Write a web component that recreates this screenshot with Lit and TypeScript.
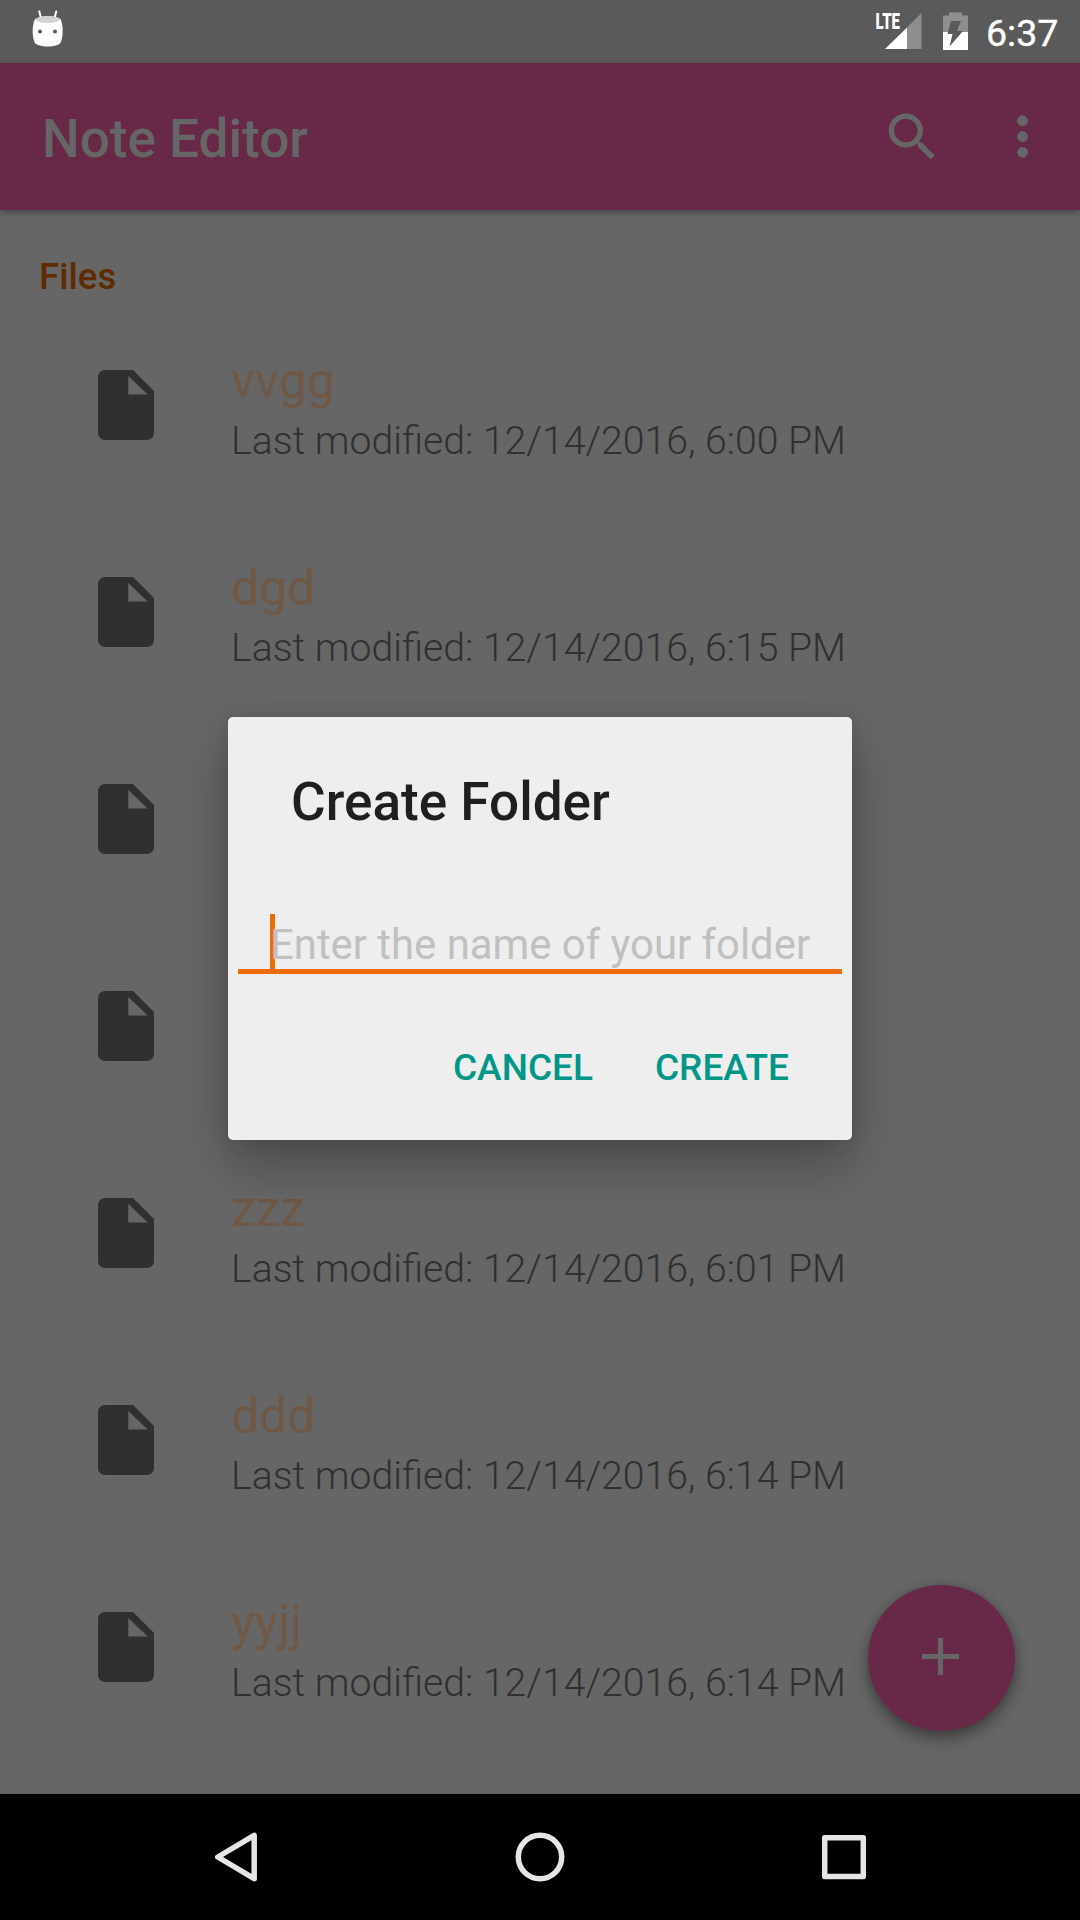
import { LitElement, html, css, svg } from "lit";
import { customElement } from "lit/decorators.js";

interface NoteFile {
  name: string;
  modified: string;
}

const FILES: NoteFile[] = [
  { name: "vvgg", modified: "12/14/2016, 6:00 PM" },
  { name: "dgd", modified: "12/14/2016, 6:15 PM" },
  { name: "", modified: "" },
  { name: "", modified: "" },
  { name: "zzz", modified: "12/14/2016, 6:01 PM" },
  { name: "ddd", modified: "12/14/2016, 6:14 PM" },
  { name: "yyjj", modified: "12/14/2016, 6:14 PM" },
];

const robot = svg`
  <path d="M39.3 11.5 L41 18 M56.2 11.5 L54.6 18" stroke="#fff" stroke-width="2" stroke-linecap="round" fill="none"/>
  <path d="M34.5 20 C38 15 58 15 61 20 C63.3 27 63.3 36 60.5 43 C57 47.6 38.5 47.6 34.8 43 C32 36 32 27 34.5 20 Z" fill="#fff"/>
  <ellipse cx="47.8" cy="19.6" rx="12" ry="3.5" fill="#d2d2d2"/>
  <circle cx="40" cy="31.6" r="2" fill="#5a5a5a"/>
  <circle cx="55" cy="31.6" r="2" fill="#5a5a5a"/>`;

@customElement("app-root")
export class AppRoot extends LitElement {
  static styles = css`
    :host {
      display: block;
      width: 1080px;
      height: 1920px;
      font-family: Roboto, "Liberation Sans", sans-serif;
    }
    * {
      box-sizing: border-box;
    }
    svg {
      display: block;
      flex: none;
    }
    .screen {
      position: relative;
      display: flex;
      flex-direction: column;
      width: 1080px;
      height: 1920px;
      background: #666;
      overflow: hidden;
    }
    .status {
      display: flex;
      flex: none;
      align-items: center;
      justify-content: space-between;
      height: 63px;
      padding-right: 21px;
      background: #5a5a5a;
      color: #fff;
    }
    .status-right {
      display: flex;
      align-items: center;
    }
    .clock {
      width: 73px;
      font-size: 37.5px;
      font-weight: 400;
      -webkit-text-stroke: 0.4px #fff;
      line-height: 63px;
      padding-top: 2px;
      height: 63px;
      white-space: nowrap;
    }
    .appbar {
      display: flex;
      flex: none;
      align-items: center;
      height: 147px;
      padding-left: 42px;
      background: #672947;
      color: #666;
      box-shadow: 0 2px 6px rgba(0, 0, 0, 0.35);
      z-index: 1;
    }
    .title {
      flex: 1;
      margin: 0;
      font-size: 53.1px;
      font-weight: 500;
      line-height: 62px;
      padding-top: 4px;
    }
    .content {
      flex: 1;
      display: flex;
      flex-direction: column;
      overflow: hidden;
    }
    .section {
      margin: 0;
      padding: 45px 0 0 39px;
      height: 111px;
      font-size: 36.6px;
      font-weight: 500;
      line-height: 44px;
      color: #602b00;
    }
    .row {
      display: flex;
      flex: none;
      height: 207px;
      padding: 29px 0 0 84px;
    }
    .file-icon {
      margin-top: 13px;
    }
    .texts {
      display: flex;
      flex-direction: column;
      padding-left: 63px;
    }
    .name {
      font-size: 49.7px;
      line-height: 62px;
      height: 67px;
      color: #6f5845;
    }
    .modified {
      font-size: 39.2px;
      font-weight: 300;
      line-height: 48px;
      color: #303030;
      white-space: nowrap;
    }
    .fab {
      position: absolute;
      left: 868px;
      top: 1585px;
      width: 147px;
      height: 146px;
      border-radius: 50%;
      background: #672947;
      box-shadow: 0 8px 16px rgba(0, 0, 0, 0.35), 0 0 8px rgba(0, 0, 0, 0.15);
    }
    .dialog {
      position: absolute;
      left: 228px;
      top: 717px;
      width: 624px;
      height: 423px;
      border-radius: 5px;
      background: #eee;
      box-shadow: 0 26px 50px rgba(0, 0, 0, 0.26), 0 0 20px rgba(0, 0, 0, 0.1);
      display: flex;
      flex-direction: column;
    }
    .dialog-title {
      margin: 0;
      padding: 54px 0 0 63px;
      height: 197px;
      font-size: 53.1px;
      font-weight: 500;
      line-height: 62px;
      color: #1f1f1f;
    }
    .field {
      display: flex;
      align-items: flex-start;
      margin: 0 10px;
      height: 60px;
      padding-left: 32px;
      border-bottom: 5px solid #ef6c00;
    }
    .cursor {
      width: 5px;
      height: 55px;
      margin-right: -5px;
      background: #ef6c00;
    }
    .hint {
      position: relative;
      font-size: 41.85px;
      line-height: 50px;
      padding-top: 6px;
      color: #c0c0c0;
      white-space: nowrap;
    }
    .actions {
      display: flex;
      justify-content: flex-end;
      gap: 62px;
      padding: 72px 63px 0 0;
    }
    .action {
      border: 0;
      padding: 0;
      background: none;
      font: 500 37px / 44px Roboto, "Liberation Sans", sans-serif;
      color: #009688;
    }
    .nav {
      flex: none;
      height: 126px;
      background: #000;
    }
  `;

  private renderRow(file: NoteFile) {
    return html`<div class="row">
      <svg class="file-icon" width="84" height="84" viewBox="0 0 24 24" fill="#303030">
        <path d="M6 2c-1.1 0-1.990.9-1.990 2L4 20c0 1.100.890 2 1.990 2H18c1.100 0 2-.9 2-2V8l-6-6H6zm6.650 7V3.700L18.200 9H13z" />
      </svg>
      <div class="texts">
        <div class="name">${file.name}</div>
        ${file.modified
          ? html`<div class="modified">Last modified: ${file.modified}</div>`
          : null}
      </div>
    </div>`;
  }

  render() {
    return html`<div class="screen">
      <div class="status">
        <svg width="96" height="63" viewBox="0 0 96 63">${robot}</svg>
        <div class="status-right">
          <svg width="112" height="63" viewBox="874 0 112 63">
            <path d="M921.500 13V49H907V27.500Z" fill="#8e8e8e" />
            <path d="M885 49 L907 27.500 V49Z" fill="#fff" />
            <text x="875.500" y="29" font-size="22" font-weight="900" textLength="24.500" lengthAdjust="spacingAndGlyphs" fill="#fff">LTE</text>
            <path d="M949 12.500h13v3h6V32h-25V15.500h6z" fill="#8e8e8e" />
            <path d="M943 32h25v18h-25z" fill="#fff" />
            <path d="M951 21h10l-4 10h6l-13.500 15.500 3-12.500h-5z" fill="#5a5a5a" />
          </svg>
          <div class="clock">6:37</div>
        </div>
      </div>
      <header class="appbar">
        <h1 class="title">Note Editor</h1>
        <svg width="200" height="147" viewBox="880 63 200 147">
          <g transform="translate(880.900 105.600) scale(2.625)" fill="#666">
            <path d="M15.500 14h-.79l-.28-.27C15.410 12.590 16 11.110 16 9.500 16 5.910 13.090 3 9.500 3S3 5.910 3 9.500 5.910 16 9.500 16c1.610 0 3.090-.59 4.230-1.570l.27.28v.79l5 4.990L20.490 19l-4.990-5zm-6 0C7.010 14 5 11.990 5 9.500S7.010 5 9.500 5 14 7.010 14 9.500 11.990 14 9.500 14z" />
          </g>
          <g fill="#666">
            <circle cx="1022.500" cy="120.700" r="5.400" />
            <circle cx="1022.500" cy="136.500" r="5.400" />
            <circle cx="1022.500" cy="152.300" r="5.400" />
          </g>
        </svg>
      </header>
      <main class="content">
        <h2 class="section">Files</h2>
        ${FILES.map((f) => this.renderRow(f))}
      </main>
      <div class="fab">
        <svg width="147" height="146" viewBox="868 1585 147 146">
          <path d="M922 1654h37v5h-37zM938 1638h5v37h-5z" fill="#666" />
        </svg>
      </div>
      <div class="dialog">
        <h2 class="dialog-title">Create Folder</h2>
        <div class="field">
          <span class="cursor"></span>
          <span class="hint">Enter the name of your folder</span>
        </div>
        <div class="actions">
          <button class="action">CANCEL</button>
          <button class="action">CREATE</button>
        </div>
      </div>
      <nav class="nav">
        <svg width="1080" height="126" viewBox="0 1794 1080 126" fill="none" stroke="#e6e6e6" stroke-width="5.500" stroke-linejoin="round">
          <path d="M217.800 1857 L254.200 1835.300 V1878.700Z" />
          <circle cx="540" cy="1857" r="21.700" />
          <rect x="824.700" y="1837.800" width="38.600" height="38.600" />
        </svg>
      </nav>
    </div>`;
  }
}
